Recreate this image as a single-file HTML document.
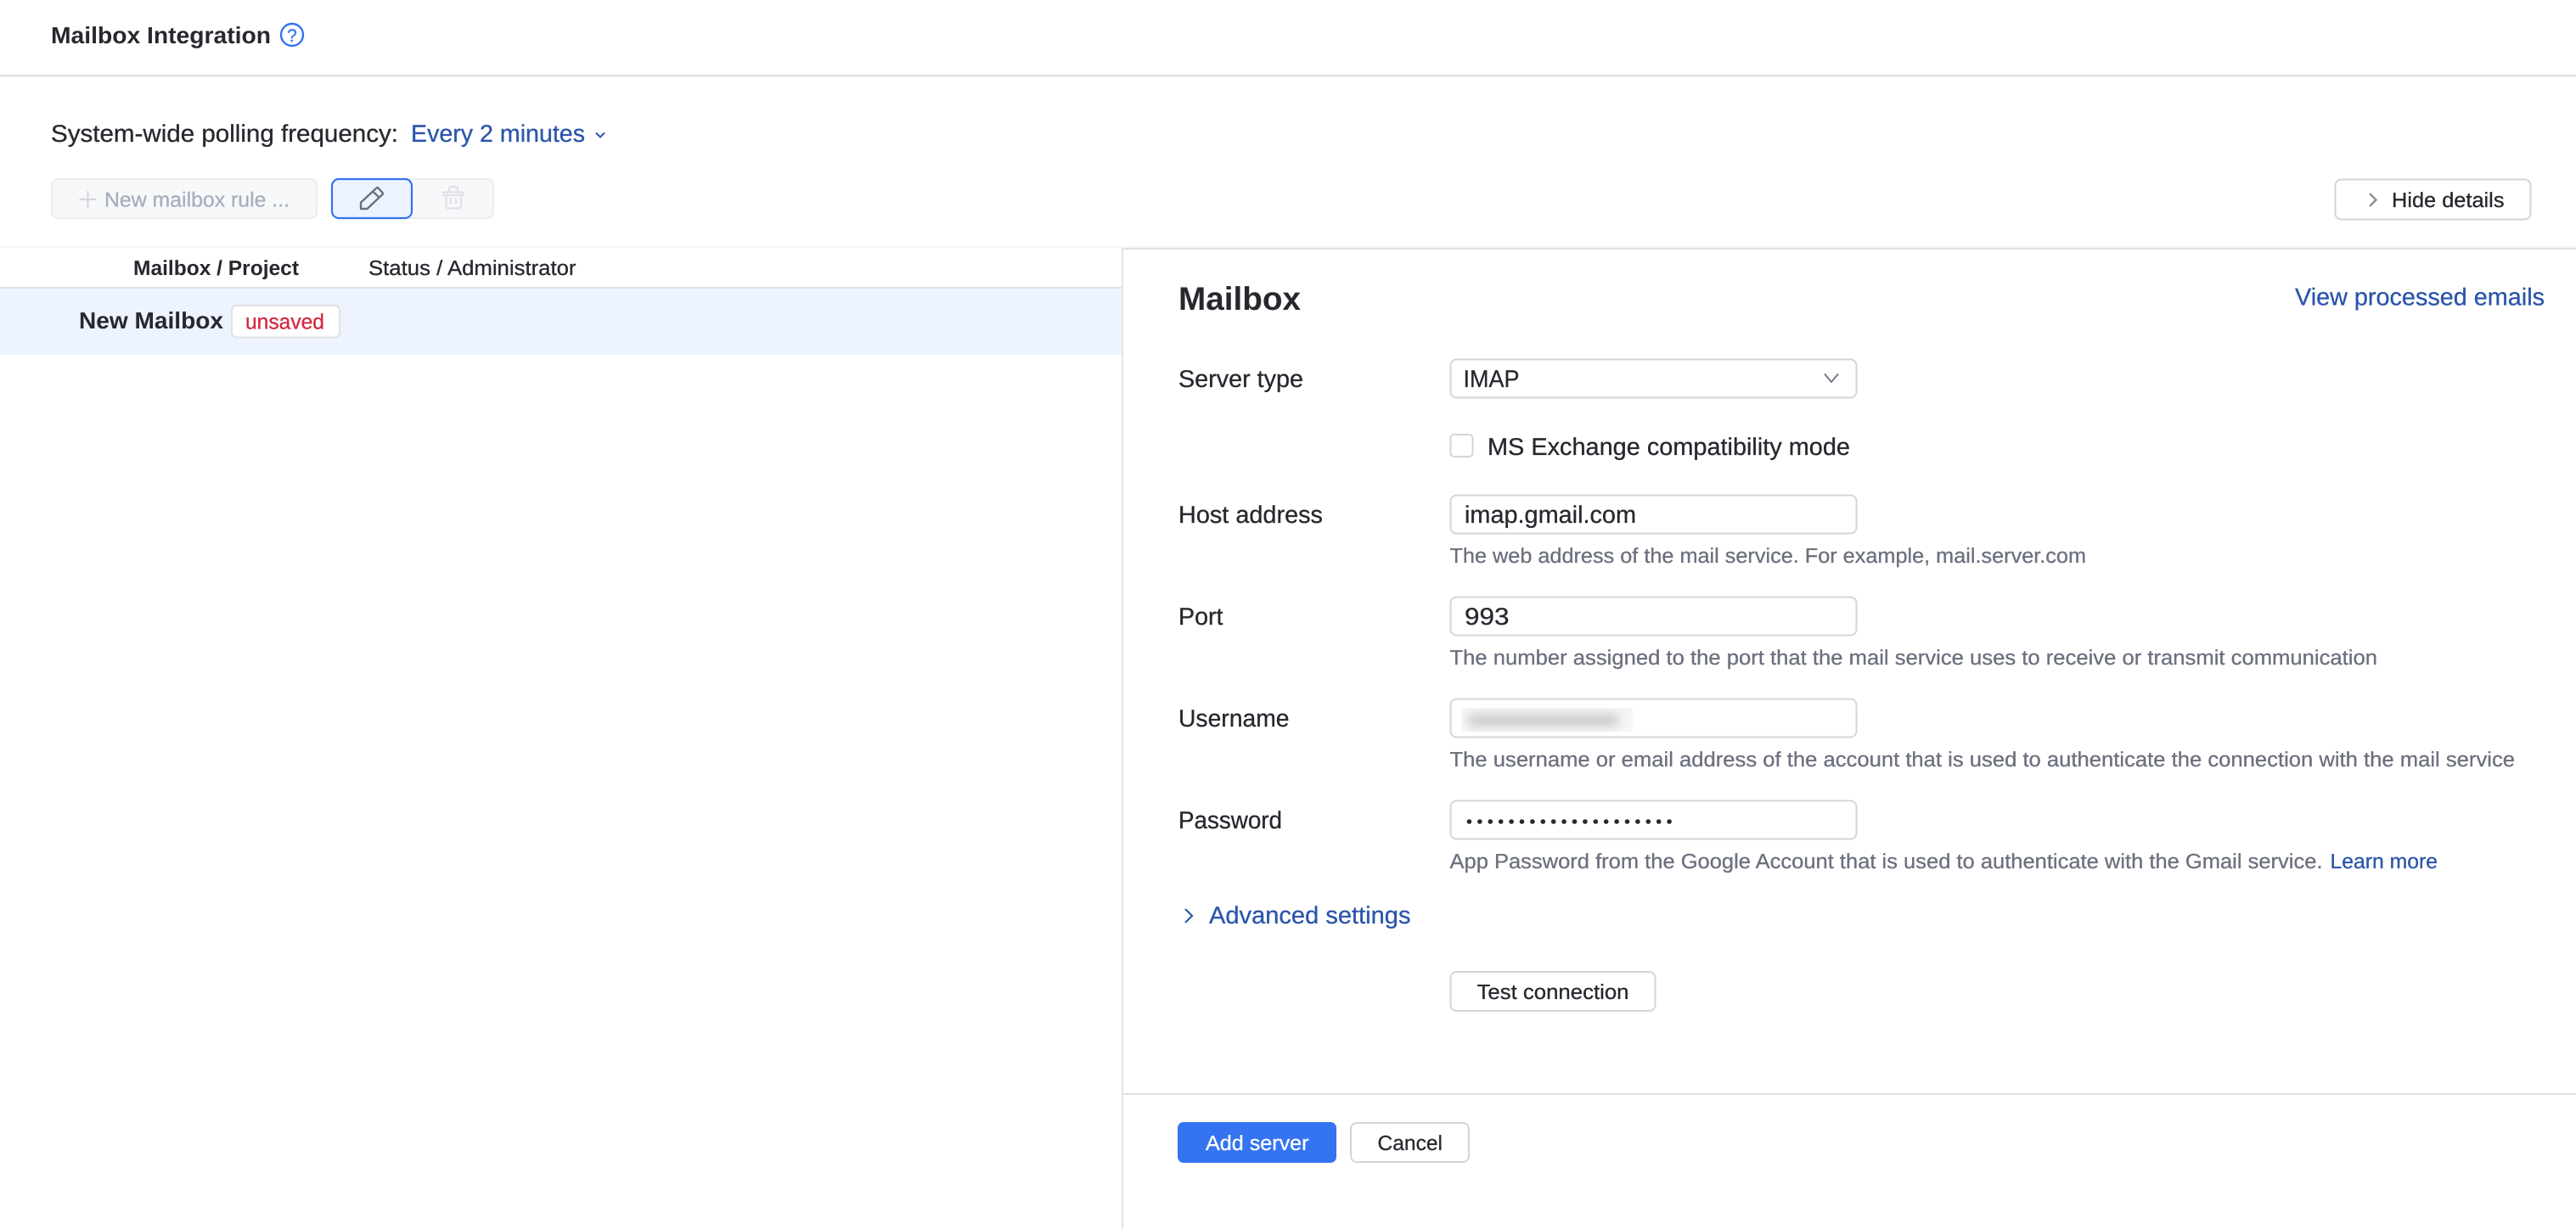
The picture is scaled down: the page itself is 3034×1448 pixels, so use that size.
<!DOCTYPE html>
<html lang="en">
<head>
<meta charset="utf-8">
<title>Mailbox Integration</title>
<style>
html,body{margin:0;padding:0;background:#fff;width:3034px;height:1448px;overflow:hidden}
svg{display:block}
text{--c:#27282e;font-family:"Liberation Sans",Arial,sans-serif;font-size:28.5px;fill:var(--c);stroke:var(--c);stroke-width:.3px;text-rendering:geometricPrecision}
.b{font-weight:700;stroke-width:0}
.h{font-size:24.5px;--c:#6c707e}
.s{font-size:24.5px}
.l{--c:#2b55ab}
.box{fill:#fff;stroke:#d3d5db;stroke-width:2}
</style>
</head>
<body>
<svg width="3034" height="1448" viewBox="0 0 3034 1448" xmlns="http://www.w3.org/2000/svg">
<defs><filter id="bl" x="-20%" y="-60%" width="140%" height="220%"><feGaussianBlur stdDeviation="6"/></filter></defs>

<!-- header -->
<text class="b" x="60" y="51" textLength="259" lengthAdjust="spacingAndGlyphs" style="font-size:27.5px">Mailbox Integration</text>
<circle cx="344" cy="41" r="13" fill="none" stroke="#3574f0" stroke-width="2.4"/>
<text x="344" y="49" text-anchor="middle" style="font-size:21px;--c:#3574f0">?</text>
<rect x="0" y="88" width="3034" height="2.5" fill="#dfe1e5"/>

<!-- polling -->
<text x="60" y="167" textLength="409" lengthAdjust="spacingAndGlyphs">System-wide polling frequency:</text>
<text class="l" x="484" y="167" textLength="205" lengthAdjust="spacingAndGlyphs">Every 2 minutes</text>
<path d="M702 156.5L707 161.5L712 156.5" fill="none" stroke="#2b55ab" stroke-width="2"/>

<!-- toolbar -->
<rect x="61" y="211" width="312" height="46" rx="7" fill="#f7f8fa" stroke="#ebecf0" stroke-width="2"/>
<path d="M103.5 225V245M93.5 235H113.5" stroke="#d3d5db" stroke-width="2" fill="none"/>
<text x="123" y="243.5" textLength="218" lengthAdjust="spacingAndGlyphs" style="font-size:24.5px;--c:#a8adbd">New mailbox rule ...</text>

<rect x="470" y="211" width="111" height="46" rx="7" fill="#f7f8fa" stroke="#ebecf0" stroke-width="2"/>
<rect x="391" y="211" width="94" height="46" rx="8" fill="#edf3ff" stroke="#3574f0" stroke-width="2.2"/>
<path d="M425 238.5L443.500 221.500Q444.500 220.500 445.500 221.500L450.500 227Q451.500 228 450.500 229L432.500 246H425ZM439 225.500L447 233" fill="none" stroke="#6c707e" stroke-width="2.4" stroke-linejoin="round"/>
<path d="M522.500 226.500H545.500V230H522.500ZM529 226V222.500Q529 220 531.500 220H536.500Q539 220 539 222.500V226M525.500 230.500V243Q525.500 245.500 528 245.500H540.500Q543 245.500 543 243V230.500M531 233V240.500M537 233V240.500" fill="none" stroke="#dfe1e5" stroke-width="2.2"/>

<!-- hide details -->
<rect x="2750.5" y="211.5" width="230" height="47" rx="7" class="box"/>
<path d="M2791 228L2798.500 235.500L2791 243" fill="none" stroke="#8c8e9c" stroke-width="2.4"/>
<text x="2817" y="244" textLength="132.5" lengthAdjust="spacingAndGlyphs" class="s">Hide details</text>

<!-- dividers -->
<rect x="0" y="290" width="3034" height="2" fill="#f6f6f8"/>
<rect x="1322" y="292" width="1712" height="2" fill="#dfe1e5"/>
<rect x="1321" y="292" width="2" height="1156" fill="#e3e4e9"/>

<!-- table -->
<text class="b s" x="157" y="324" textLength="195" lengthAdjust="spacingAndGlyphs">Mailbox / Project</text>
<text class="s" x="434" y="324" textLength="244.5" lengthAdjust="spacingAndGlyphs">Status / Administrator</text>
<rect x="0" y="338" width="1321" height="2" fill="#dfe1e5"/>
<rect x="0" y="340" width="1321" height="78" fill="#edf3ff"/>
<text class="b" x="93" y="387" textLength="170" lengthAdjust="spacingAndGlyphs" style="font-size:27.5px">New Mailbox</text>
<rect x="273" y="360" width="127" height="37.5" rx="6" fill="#fff" stroke="#dfe1e5" stroke-width="2"/>
<text x="289" y="387.5" textLength="93" lengthAdjust="spacingAndGlyphs" style="font-size:25px;--c:#d1293d">unsaved</text>

<!-- details -->
<text class="b" x="1388" y="365" textLength="144" lengthAdjust="spacingAndGlyphs" style="font-size:38.5px">Mailbox</text>
<text class="l" x="2703" y="359.5" textLength="294" lengthAdjust="spacingAndGlyphs">View processed emails</text>

<text x="1388" y="456" textLength="147" lengthAdjust="spacingAndGlyphs">Server type</text>
<rect x="1708.5" y="423.5" width="478" height="45" rx="7" class="box"/>
<text x="1723.5" y="456" textLength="66" lengthAdjust="spacingAndGlyphs">IMAP</text>
<path d="M2149 440.500L2157 450L2165 440.500" fill="none" stroke="#6c707e" stroke-width="1.8"/>

<rect x="1708.5" y="512" width="26" height="26" rx="4" class="box"/>
<text x="1752" y="536" textLength="427" lengthAdjust="spacingAndGlyphs">MS Exchange compatibility mode</text>

<text x="1388" y="616" textLength="170" lengthAdjust="spacingAndGlyphs">Host address</text>
<rect x="1708.5" y="583.5" width="478" height="45" rx="7" class="box"/>
<text x="1725" y="616" textLength="202" lengthAdjust="spacingAndGlyphs">imap.gmail.com</text>
<text class="h" x="1707.5" y="663" textLength="749.5" lengthAdjust="spacingAndGlyphs">The web address of the mail service. For example, mail.server.com</text>

<text x="1388" y="736" textLength="52.5" lengthAdjust="spacingAndGlyphs">Port</text>
<rect x="1708.5" y="703.5" width="478" height="45" rx="7" class="box"/>
<text x="1725" y="736" textLength="52.5" lengthAdjust="spacingAndGlyphs">993</text>
<text class="h" x="1707.5" y="783" textLength="1092.5" lengthAdjust="spacingAndGlyphs">The number assigned to the port that the mail service uses to receive or transmit communication</text>

<text x="1388" y="856" textLength="130.5" lengthAdjust="spacingAndGlyphs">Username</text>
<rect x="1708.5" y="823.5" width="478" height="45" rx="7" class="box"/>
<rect x="1722" y="834" width="201" height="28" fill="#f6f6f6"/>
<g filter="url(#bl)" fill="#c6c6c6"><rect x="1730" y="842" width="176" height="13"/></g>
<text class="h" x="1707.5" y="903" textLength="1254.5" lengthAdjust="spacingAndGlyphs">The username or email address of the account that is used to authenticate the connection with the mail service</text>

<text x="1388" y="976" textLength="122" lengthAdjust="spacingAndGlyphs">Password</text>
<rect x="1708.5" y="943.5" width="478" height="45" rx="7" class="box"/>
<g fill="#27282e">
<circle cx="1730.5" cy="968" r="2.8"/><circle cx="1742.9" cy="968" r="2.8"/><circle cx="1755.3" cy="968" r="2.8"/><circle cx="1767.7" cy="968" r="2.8"/><circle cx="1780.1" cy="968" r="2.8"/>
<circle cx="1792.5" cy="968" r="2.8"/><circle cx="1804.9" cy="968" r="2.8"/><circle cx="1817.3" cy="968" r="2.8"/><circle cx="1829.7" cy="968" r="2.8"/><circle cx="1842.1" cy="968" r="2.8"/>
<circle cx="1854.5" cy="968" r="2.8"/><circle cx="1866.9" cy="968" r="2.8"/><circle cx="1879.3" cy="968" r="2.8"/><circle cx="1891.7" cy="968" r="2.8"/><circle cx="1904.1" cy="968" r="2.8"/>
<circle cx="1916.5" cy="968" r="2.8"/><circle cx="1928.9" cy="968" r="2.8"/><circle cx="1941.3" cy="968" r="2.8"/><circle cx="1953.7" cy="968" r="2.8"/><circle cx="1966.1" cy="968" r="2.8"/>
</g>
<text class="h" x="1707.5" y="1023" textLength="1028" lengthAdjust="spacingAndGlyphs">App Password from the Google Account that is used to authenticate with the Gmail service.</text>
<text class="h" x="2744.5" y="1023" textLength="126.5" lengthAdjust="spacingAndGlyphs" style="--c:#2b55ab">Learn more</text>

<path d="M1396 1071L1404 1079L1396 1087" fill="none" stroke="#2b55ab" stroke-width="2.2"/>
<text class="l" x="1424" y="1088" textLength="237.5" lengthAdjust="spacingAndGlyphs">Advanced settings</text>

<rect x="1708.5" y="1145" width="241" height="46" rx="7" class="box"/>
<text class="s" x="1739.5" y="1177" textLength="179" lengthAdjust="spacingAndGlyphs">Test connection</text>

<!-- footer -->
<rect x="1323" y="1288" width="1711" height="2" fill="#dfe1e5"/>
<rect x="1387" y="1322" width="187" height="48" rx="7" fill="#3574f0"/>
<text class="s" x="1420" y="1355" textLength="121.5" lengthAdjust="spacingAndGlyphs" style="--c:#fff">Add server</text>
<rect x="1591" y="1323" width="139" height="46" rx="7" class="box"/>
<text class="s" x="1622.5" y="1355" textLength="76.5" lengthAdjust="spacingAndGlyphs">Cancel</text>
</svg>
</body>
</html>
